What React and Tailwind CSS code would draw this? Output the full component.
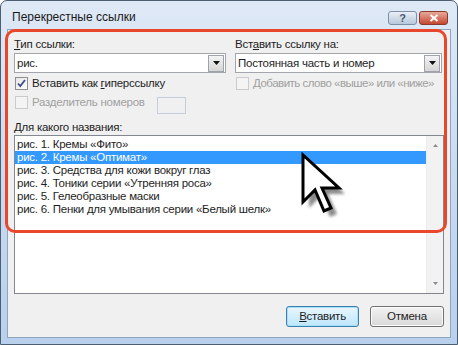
import { useState } from 'react'

const items = [
  'рис. 1. Кремы «Фито»',
  'рис. 2. Кремы «Оптимат»',
  'рис. 3. Средства для кожи вокруг глаз',
  'рис. 4. Тоники серии «Утренняя роса»',
  'рис. 5. Гелеобразные маски',
  'рис. 6. Пенки для умывания серии «Белый шелк»',
]

function Combo({ value }) {
  return (
    <div className="flex h-[20px] items-center border border-[#a3a6ad] bg-white pl-[2px] pr-[1px]">
      <span className="flex-1 leading-[14px]">{value}</span>
      <div className="flex h-[17px] w-[16px] items-center justify-center border border-[#9ea3ab] bg-gradient-to-b from-[#f4f4f4] to-[#d6d6d6]">
        <svg width="7" height="4" viewBox="0 0 7 4"><path d="M0 0h7L3.5 4z" fill="#111" /></svg>
      </div>
    </div>
  )
}

function Check({ checked, disabled, children }) {
  return (
    <div className={`flex h-[15px] items-center whitespace-nowrap ${disabled ? 'text-[#a0a0a0]' : 'text-[#1e1e1e]'}`}>
      <div
        className={`mx-[1px] flex h-[13px] w-[13px] shrink-0 items-center justify-center border ${
          disabled ? 'border-[#cbcbcb] bg-[#f4f4f4]' : 'border-[#8e8f8f] bg-gradient-to-br from-[#e6e6e6] to-white'
        }`}
      >
        {checked && (
          <svg width="9" height="9" viewBox="0 0 9 9">
            <path d="M1 4.5l2.3 2.6L8 1" fill="none" stroke="#3b4f8c" strokeWidth="1.8" />
          </svg>
        )}
      </div>
      <span className="ml-[3px] leading-[15px]">{children}</span>
    </div>
  )
}

export default function App() {
  const [selected, setSelected] = useState(1)

  return (
    <div className="relative h-[345px] w-[458px] overflow-hidden bg-white font-['Liberation_Sans',Arial,sans-serif] text-[11.5px] tracking-[-0.25px] text-[#1e1e1e]">
      <div className="flex h-full flex-col rounded-t-[7px] border border-[#4d5d72] bg-gradient-to-b from-[#dfe9f6] via-[#c9dbf0] to-[#b9d0ec]">
        {/* title bar */}
        <div className="flex h-[28px] items-start pl-[11px] pr-[9px]">
          <span className="mt-[9px] text-[12px] leading-[15px] tracking-normal text-[#1a1a1a]">Перекрестные ссылки</span>
          <div className="ml-auto mt-[10px] flex gap-[2px]">
            <div className="flex h-[14px] w-[29px] items-center justify-center rounded-[3px] border border-[#7d8ea6] bg-gradient-to-b from-[#e9eff7] to-[#b8c8dc]">
              <span className="text-[11px] font-bold leading-[11px] text-[#4a5a72]">?</span>
            </div>
            <div className="flex h-[14px] w-[29px] items-center justify-center rounded-[3px] border border-[#8c3a2e] bg-gradient-to-b from-[#e8a898] to-[#c2452f]">
              <svg width="10" height="8" viewBox="0 0 10 8">
                <path d="M1.5 1l7 6M8.5 1l-7 6" stroke="#fff" strokeWidth="2" />
              </svg>
            </div>
          </div>
        </div>

        {/* client area */}
        <div className="mx-[6px] mb-[6px] flex flex-1 flex-col border border-[#8fa4bf] bg-[#f0f0f0] px-[6px] pt-[7px]">
          <div className="grid grid-cols-[212px_207px] gap-x-[9px]">
            <div>
              <div className="leading-[15px]"><u>Т</u>ип ссылки:</div>
              <div className="mt-[1px]"><Combo value="рис." /></div>
              <div className="mt-[3px]">
                <Check checked>Вставить как <u>г</u>иперссылку</Check>
              </div>
              <div className="mt-[4px] flex items-start">
                <Check disabled>Разделитель номеров</Check>
                <div className="ml-[12px] mt-[2px] h-[17px] w-[29px] border border-[#c5cfdb] bg-[#f0f0f0]" />
              </div>
            </div>
            <div>
              <div className="leading-[15px]">Вст<u>а</u>вить ссылку на:</div>
              <div className="mt-[1px]"><Combo value="Постоянная часть и номер" /></div>
              <div className="mt-[3px] tracking-[-0.5px]">
                <Check disabled>Добавить слово «выше» или «ниже»</Check>
              </div>
            </div>
          </div>

          <div className="mt-[6px] leading-[15px]"><u>Д</u>ля какого названия:</div>
          <div className="flex h-[159px] border border-[#828790] bg-white">
            <div className="flex-1 pt-[2px]">
              {items.map((t, i) => (
                <div
                  key={t}
                  onClick={() => setSelected(i)}
                  className={`h-[13px] px-[2px] leading-[13px] ${i === selected ? 'bg-[#3399ff] text-white' : ''}`}
                >
                  {t}
                </div>
              ))}
            </div>
            <div className="flex w-[17px] flex-col items-center justify-between border-l border-[#ececec] bg-[#f2f2f2] py-[8px]">
              <svg width="5" height="3" viewBox="0 0 5 3"><path d="M0 3L2.5 0L5 3z" fill="#8a8a8a" /></svg>
              <svg width="5" height="3" viewBox="0 0 5 3"><path d="M0 0L2.5 3L5 0z" fill="#8a8a8a" /></svg>
            </div>
          </div>

          <div className="mt-[12px] flex justify-end gap-[11px]">
            <button className="h-[21px] w-[73px] rounded-[3px] border border-[#3c7fb1] bg-gradient-to-b from-[#eaf6fd] to-[#bee6fd] leading-[15px] shadow-[inset_0_0_0_1px_#a7e0fa]">
              <u>В</u>ставить
            </button>
            <button className="h-[21px] w-[74px] rounded-[3px] border border-[#707070] bg-gradient-to-b from-[#f2f2f2] to-[#d9d9d9] leading-[15px] shadow-[inset_0_0_0_1px_#fcfcfc]">
              Отмена
            </button>
          </div>
        </div>
      </div>

      {/* red highlight frame */}
      <div className="pointer-events-none absolute left-[5px] top-[29px] h-[204px] w-[442px] rounded-[10px] border-[3px] border-[#e8472b]" />

      {/* mouse cursor */}
      <svg className="pointer-events-none absolute left-[300px] top-[152px]" width="50" height="68" viewBox="0 0 50 68">
        <defs>
          <filter id="blur" x="-20%" y="-20%" width="140%" height="140%">
            <feGaussianBlur stdDeviation="1.6" />
          </filter>
        </defs>
        <path d="M9 9v47l12-12 9 21 7-3-9-20h17z" fill="#000" opacity="0.45" filter="url(#blur)" />
        <path d="M3 3v47l12-12 9 21 7-3-9-20h17z" fill="#fff" stroke="#000" strokeWidth="3" strokeLinejoin="miter" />
      </svg>
    </div>
  )
}
